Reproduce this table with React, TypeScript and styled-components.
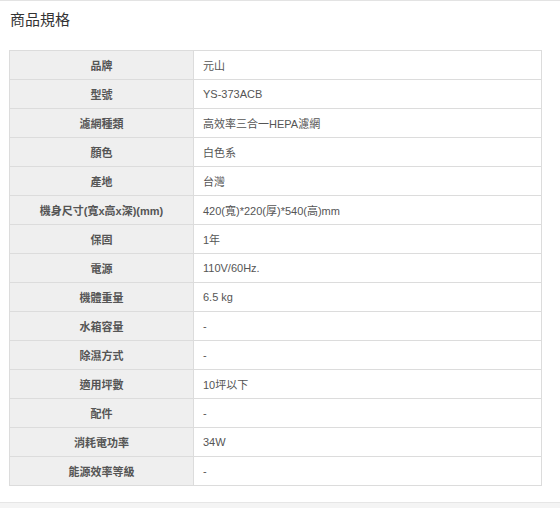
import React from "react";
import styled, { createGlobalStyle } from "styled-components";

const GlobalStyle = createGlobalStyle`
  html, body { margin: 0; padding: 0; background: #fff; }
  body { font-family: "Liberation Sans", "Noto Sans CJK TC", Arial, sans-serif; }
`;

const Page = styled.div`
  width: 560px;
  height: 508px;
  box-sizing: border-box;
  border-top: 1px solid #e3e3e3;
  display: flex;
  flex-direction: column;
  overflow: hidden;
`;

const Title = styled.h2`
  margin: 0;
  padding: 10px 0 0 10px;
  height: 39px;
  box-sizing: border-box;
  font-size: 15px;
  line-height: 18px;
  font-weight: normal;
  color: #333;
`;

const Table = styled.table`
  margin: 10px 0 0 9px;
  width: 533px;
  border-collapse: collapse;
  table-layout: fixed;
  border: 1px solid #dcdcdc;
`;

const Row = styled.tr``;

const Label = styled.th`
  width: 183px;
  height: 28px;
  padding: 0;
  background: #efefef;
  border: 1px solid #dcdcdc;
  text-align: center;
  font-size: 11px;
  font-weight: bold;
  color: #555;
`;

const Value = styled.td`
  height: 28px;
  padding: 0 0 0 9px;
  background: #fff;
  border: 1px solid #dcdcdc;
  text-align: left;
  font-size: 11px;
  color: #555;
`;

const Footer = styled.div`
  margin-top: auto;
  height: 5px;
  border-top: 1px solid #e6e6e6;
  background: #f4f4f4;
`;

const specs: [string, string][] = [
  ["品牌", "元山"],
  ["型號", "YS-373ACB"],
  ["濾網種類", "高效率三合一HEPA濾網"],
  ["顏色", "白色系"],
  ["產地", "台灣"],
  ["機身尺寸(寬x高x深)(mm)", "420(寬)*220(厚)*540(高)mm"],
  ["保固", "1年"],
  ["電源", "110V/60Hz."],
  ["機體重量", "6.5 kg"],
  ["水箱容量", "-"],
  ["除濕方式", "-"],
  ["適用坪數", "10坪以下"],
  ["配件", "-"],
  ["消耗電功率", "34W"],
  ["能源效率等級", "-"],
];

export default function App() {
  return (
    <>
      <GlobalStyle />
      <Page>
        <Title>商品規格</Title>
        <Table>
          <tbody>
            {specs.map(([k, v]) => (
              <Row key={k}>
                <Label>{k}</Label>
                <Value>{v}</Value>
              </Row>
            ))}
          </tbody>
        </Table>
        <Footer />
      </Page>
    </>
  );
}
